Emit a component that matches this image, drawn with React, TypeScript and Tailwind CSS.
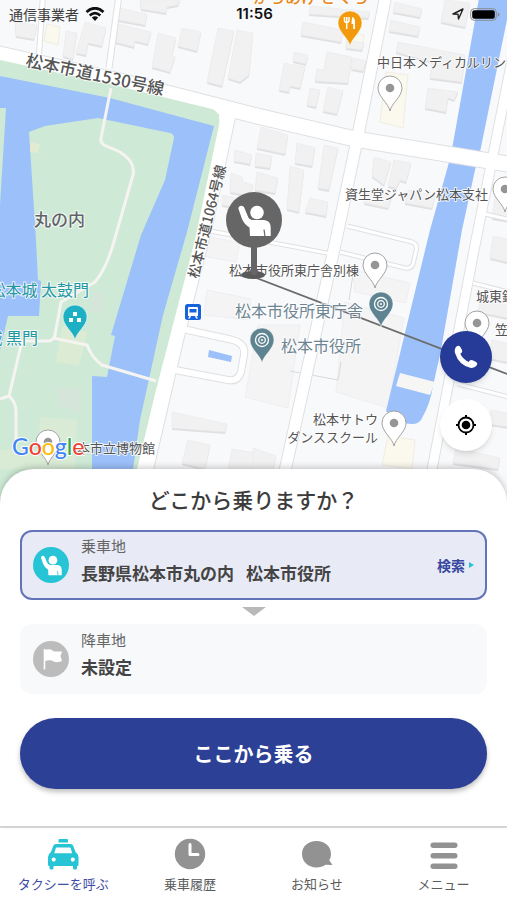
import type { ReactNode } from "react";

const MAP_FONT = "font-['Noto_Sans_CJK_JP',sans-serif]";

// rough footprints, drawn once in grey as a shadow and once on top
const BUILDINGS = [
  "15,22 37,25 34,39 16,36",
  "66,31 77,33 73,59 63,56",
  "85,22 106,28 102,46 88,43 86,55 76,53",
  "120,8 147,14 145,25 118,20",
  "118,24 151,32 148,44 135,41 134,47 115,42",
  "140,0 180,0 178,5 167,7 166,13 141,9",
  "158,33 176,38 172,55 175,57 170,72 152,67",
  "182,28 201,32 197,51 178,46",
  "218,28 234,31 222,86 207,82",
  "237,30 253,33 249,75 240,82 228,78",
  "235,150 252,155 250,164 234,161",
  "231,173 242,177 243,182 253,185 250,196 230,192",
  "222,195 236,198 234,207 222,205",
  "310,6 370,12 368,18 309,14",
  "303,22 343,30 341,42 301,35",
  "347,40 364,43 362,50 346,48",
  "294,52 308,55 306,64 293,61",
  "284,63 305,67 300,88 290,86 289,92 279,90",
  "327,52 352,57 350,68 348,83 315,81 317,69 324,70",
  "353,58 366,61 363,71 351,69",
  "310,88 320,90 316,107 307,105",
  "328,87 343,91 337,114 323,111",
  "395,2 422,9 420,17 393,12",
  "391,20 420,27 418,36 389,31",
  "445,0 470,3 465,27 441,22",
  "398,42 465,55 462,82 430,78 432,62 396,52",
  "428,88 458,92 454,100 448,98 446,112 425,108",
  "261,127 288,135 285,154 257,148",
  "256,153 272,156 270,168 255,166",
  "257,172 278,178 275,193 255,190",
  "297,143 315,148 312,166 295,163",
  "324,145 338,148 329,190 318,188",
  "290,166 304,170 299,212 287,209",
  "374,157 391,162 384,185 372,176",
  "394,160 411,163 406,182 400,180 396,188 388,186",
  "310,198 328,202 326,216 305,212",
  "366,190 392,196 388,208 364,203",
  "408,190 435,196 432,208 405,203",
  "495,198 520,202 516,222 492,218",
  "493,236 520,242 516,264 490,258",
  "480,300 510,306 508,318 478,312",
  "492,340 520,346 516,364 488,358",
  "491,410 520,416 516,428 489,424",
  "456,448 500,458 498,469 453,463",
  "172,412 227,424 225,432 172,428",
  "188,440 210,445 205,469 182,463",
  "232,449 262,454 260,469 228,469",
  "253,448 276,456 273,469 253,469",
];

// larger plots without a shadow
const PLOTS = [
  "206,236 240,243 236,262 203,256",
  "207,290 251,299 249,320 204,315",
  "258,325 300,325 288,408 245,397",
  "353,270 410,283 406,303 355,292",
  "345,302 404,318 388,408 336,392",
];

const TAN_PLOTS = [
  "47,24 60,27 58,45 44,41",
  "386,72 408,75 403,128 380,122",
  "347,32 364,35 362,50 346,48",
  "388,436 415,440 412,469 382,465",
];

const ROADS = [
  { d: "M-5 53 L120 81 L253 115 L355 139 L520 166", w: 15 },
  { d: "M228 112 L203 230 L175 340 L145 469 L130 535", w: 16 },
  { d: "M386 -5 L356 145 L336 240 L283 480 L270 535", w: 11 },
  { d: "M520 20 L491 165 L476 240 L430 480 L420 535", w: 9 },
  { d: "M119 -5 L109 68", w: 5 },
  { d: "M43 -5 L39 55", w: 4 },
  { d: "M183 329 L233 340 Q246 344 244 355 L241 372 Q238 382 228 380 L175 370", w: 6 },
  { d: "M485 214 L520 222", w: 3 },
  { d: "M473 283 L520 295", w: 3 },
  { d: "M458 384 L520 400", w: 3 },
  { d: "M347 226 L412 242 Q418 244 416 251 L413 264 Q411 269 405 268 L340 252", w: 3 },
  { d: "M205 230 L332 254", w: 3 },
];

const STATUS_TEXT = "font-['Noto_Sans_CJK_JP',sans-serif] text-sm text-[#3c3c3c]";

export default function App() {
  return (
    <main
      className={`flex min-h-screen w-full flex-col overflow-x-hidden bg-white text-[#444] ${MAP_FONT}`}
    >
      <section className="relative shrink-0" aria-label="地図">
        <CityMap />
        <StatusBar />
        <div className="absolute right-[15px] top-[331px] flex flex-col gap-4">
          <button
            type="button"
            aria-label="電話"
            className="flex h-[52px] w-[52px] items-center justify-center rounded-full bg-[#263b98] shadow-md"
          >
            <PhoneIcon />
          </button>
          <button
            type="button"
            aria-label="現在地"
            className="flex h-[52px] w-[52px] items-center justify-center rounded-full bg-white shadow-md"
          >
            <LocateIcon />
          </button>
        </div>
      </section>

      <section className="relative -mt-[61px] flex-1 rounded-t-[34px] bg-white px-5 pb-9 pt-[15px] shadow-[0_-2px_6px_rgba(0,0,0,0.2)]">
        <h1 className="mb-4 text-center text-[21px] font-medium leading-[30px] text-[#3c3c3c]">
          どこから乗りますか？
        </h1>

        <button
          type="button"
          className="flex h-[70px] w-full items-center rounded-xl border-2 border-[#6373b9] bg-[#e8ebf5] px-[11px] text-left"
        >
          <span className="flex h-9 w-9 shrink-0 items-center justify-center rounded-full bg-[#27c4d6]">
            <HailIcon />
          </span>
          <PlaceText label="乗車地">
            <span>長野県松本市丸の内</span>
            <span>松本市役所</span>
          </PlaceText>
          <span className="ml-auto flex items-center gap-1 text-sm font-bold text-[#3748a0]">
            検索
            <svg viewBox="0 0 5 6" className="h-[6px] w-[5px]">
              <path d="M0 0 L5 3 L0 6Z" fill="#27c4d6" />
            </svg>
          </span>
        </button>

        <svg viewBox="0 0 24 9" className="mx-auto mb-2 mt-[7px] block h-[9px] w-6">
          <path d="M0 0 H24 L12 9Z" fill="#b9b9b9" />
        </svg>

        <button
          type="button"
          className="flex h-[70px] w-full items-center rounded-xl bg-[#f7f9fb] px-[13px] text-left"
        >
          <span className="flex h-9 w-9 shrink-0 items-center justify-center rounded-full bg-[#bcbcbc]">
            <FlagIcon />
          </span>
          <PlaceText label="降車地">
            <span>未設定</span>
          </PlaceText>
        </button>

        <button
          type="button"
          className="mt-6 h-[71px] w-full rounded-full bg-[#2c4095] text-xl font-bold text-white shadow-[0_3px_5px_rgba(0,0,0,0.25)]"
        >
          ここから乗る
        </button>
      </section>

      <nav className="grid grid-cols-4 border-t-2 border-[#dcdcdc] bg-white pb-[6px] pt-[10px]">
        <NavItem label="タクシーを呼ぶ" active>
          <path
            fillRule="evenodd"
            d="M12.500 1 H20 Q21 1 21 2 V4.500 H11.500 V2 Q11.500 1 12.500 1Z M9 6 H23.500 Q25.500 6 26.300 8 L28.500 14 Q31.500 16 31.500 19 V27 Q31.500 28 30 28 V30 Q30 31.500 28.500 31.500 H27.500 Q26 31.500 26 30 V28 H6.500 V30 Q6.500 31.500 5 31.500 H4 Q2.500 31.500 2.500 30 V28 Q1 28 1 27 V19 Q1 16 4 14 L6.200 8 Q7 6 9 6Z M9.500 9.500 Q9 9.500 8.700 10.500 L7.300 15.300 H25.200 L23.800 10.500 Q23.500 9.500 23 9.500Z M6.700 19.500 A2.100 2.100 0 1 0 6.700 23.700 A2.100 2.100 0 1 0 6.700 19.500Z M25.800 19.500 A2.100 2.100 0 1 0 25.800 23.700 A2.100 2.100 0 1 0 25.800 19.500Z"
          />
        </NavItem>
        <NavItem label="乗車履歴">
          <circle cx="16" cy="16" r="15.200" />
          <path
            d="M16 6.500 V16.500 H24"
            fill="none"
            stroke="#fff"
            strokeWidth="3"
            strokeLinecap="round"
            strokeLinejoin="round"
          />
        </NavItem>
        <NavItem label="お知らせ">
          <path d="M15.500 3 C24 3 30 8.500 30 16 C30 18.500 29.300 20.500 28.200 22.300 L31.500 27 L24.500 26.800 C22 28.500 19 29.400 15.500 29.400 C7 29.400 1 23.500 1 16 C1 8.500 7 3 15.500 3Z" />
        </NavItem>
        <NavItem label="メニュー">
          <rect x="2.500" y="4.500" width="27" height="5.500" rx="2.700" />
          <rect x="2.500" y="15" width="27" height="5.500" rx="2.700" />
          <rect x="2.500" y="25.500" width="27" height="5.500" rx="2.700" />
        </NavItem>
      </nav>
    </main>
  );
}

function PlaceText({ label, children }: { label: string; children: ReactNode }) {
  return (
    <span className="ml-3 flex flex-col pb-2">
      <span className="text-[15px] leading-6 text-[#666]">{label}</span>
      <span className="flex gap-3 text-[17px] font-bold leading-[30px] text-[#444]">
        {children}
      </span>
    </span>
  );
}

function NavItem({
  label,
  active = false,
  children,
}: {
  label: string;
  active?: boolean;
  children: ReactNode;
}) {
  return (
    <a
      href="#"
      aria-current={active ? "page" : undefined}
      className={`flex flex-col items-center gap-1 text-[13px] leading-5 ${
        active ? "text-[#3f4da5]" : "text-[#5c5c5c]"
      }`}
    >
      <svg
        viewBox="0 0 32 32"
        className={`h-8 w-8 ${active ? "fill-[#27c4d6]" : "fill-[#929292]"}`}
      >
        {children}
      </svg>
      {label}
    </a>
  );
}

function StatusBar() {
  return (
    <div className="absolute inset-x-0 top-0 grid h-7 grid-cols-3 items-center pl-[9px] pr-[7px]">
      <div className="flex items-center gap-1.5">
        <span className={STATUS_TEXT}>通信事業者</span>
        <svg viewBox="0 0 20 14" className="h-[14px] w-5" fill="none" stroke="#111">
          <path d="M1.500 5 Q10 -2.500 18.500 5" strokeWidth="2.800" />
          <path d="M4.700 8.500 Q10 3.800 15.300 8.500" strokeWidth="2.600" />
          <path d="M6.800 10.500 Q10 7.800 13.200 10.500 L10 14Z" fill="#111" stroke="none" />
        </svg>
      </div>
      <div className="text-center font-['Inter',sans-serif] text-[15px] font-semibold text-[#111]">
        11:56
      </div>
      <div className="flex items-center justify-end gap-1.5">
        <svg viewBox="0 0 12 12" className="h-3 w-3">
          <path
            d="M1 6 L11 1 L6.500 11 L6 6.300Z"
            fill="none"
            stroke="#222"
            strokeWidth="1.400"
            strokeLinejoin="round"
          />
        </svg>
        <svg viewBox="0 0 30 13" className="h-[13px] w-[30px]">
          <rect x="0.700" y="0.700" width="25.600" height="11.600" rx="3.500" fill="none" stroke="#8c8c8c" />
          <rect x="2.200" y="2.200" width="22.600" height="8.600" rx="2" fill="#000" />
          <path d="M27.800 4.300 Q29.500 5 29.500 6.500 Q29.500 8 27.800 8.700Z" fill="#8c8c8c" />
        </svg>
      </div>
    </div>
  );
}

function CityMap() {
  return (
    <svg viewBox="0 0 507 530" className="block w-full" role="img" aria-label="松本市丸の内周辺">
      <rect width="507" height="530" fill="#f8f9fb" />

      {PLOTS.map((p) => (
        <polygon key={p} points={p} fill="#f4f4f5" stroke="#efeff1" />
      ))}
      {TAN_PLOTS.map((p) => (
        <polygon key={p} points={p} fill="#fbf8ee" stroke="#f0ede4" />
      ))}
      {BUILDINGS.map((p) => (
        <g key={p}>
          <polygon points={p} fill="#e0e0e2" transform="translate(0 2)" />
          <polygon points={p} fill="#f1f1f2" stroke="#eaeaec" strokeWidth="0.600" />
        </g>
      ))}
      <path d="M290 371 L338 380 L341 362 M353 275 L349 300" stroke="#d9d9dc" fill="none" />

      {/* river */}
      <path
        d="M479 -2 L452 149 L448 166 L430 230 L386 411 L398 423 L413 424 Q420 424 423 416 Q430 404 433 386 L441 350 L462 230 L475 170 L480 152 L509 10 V-2Z"
        fill="#9cc0f9"
      />

      {/* casing first, so that the junctions stay open */}
      {ROADS.map((r) => (
        <path
          key={r.d}
          d={r.d}
          fill="none"
          stroke="#dfe0e3"
          strokeWidth={r.w + 2}
          strokeLinejoin="round"
        />
      ))}
      {ROADS.map((r) => (
        <path
          key={r.d}
          d={r.d}
          fill="none"
          stroke="#fff"
          strokeWidth={r.w}
          strokeLinejoin="round"
        />
      ))}
      <path d="M400 373 L435 382 L430 395 L396 386Z" fill="#f6f6f4" />
      <path d="M209 350 L232 356 L231 362 L208 357Z" fill="#9cc0f9" />

      {/* castle grounds and moat */}
      <path
        d="M0 60 L110 84 L212 109 Q221 112 219 125 L195 240 L156 390 L137 469 L122 530 H0Z"
        fill="#ceead6"
      />
      <path
        d="M0 76 L110 98 L214 126 L187 232 L163 315 L140 420 L133 469 L122 530 H92 V376 L107 377 L115 336 L111 335 L141 235 L165 180 L174 138 Q174 134 170 133 L98 118 L45 126 L29 132 L36 240 L38 280 L41 281 L39 316 L8 316 L0 350 V205 L6 108 H0Z"
        fill="#9cc0f9"
      />
      <rect x="0" y="500" width="10" height="30" fill="#9cc0f9" />
      <g fill="#d5e5d9">
        <polygon points="93,292 106,296 101,314 90,312" />
        <polygon points="62,326 87,332 79,366 56,362" fill="#dcebd3" />
        <polygon points="58,387 81,388 79,412 72,412 72,408 57,407" />
        <polygon points="40,417 77,420 75,469 0,469 0,450 38,446" fill="#d9ebd5" />
        <polygon points="30,142 40,144 38,153 30,152" fill="#e2ead2" />
      </g>
      <g fill="none" stroke="#f6f4f1" strokeWidth="3" strokeLinejoin="round">
        <path d="M111 88 L101 138 Q100 142 104 145 L120 152 Q136 162 133 175 L115 238 Q107 268 95 282 L61 302 L55 335 Q53 341 48 341 L22 341 L9 396 L0 399" />
        <path d="M53 338 L87 345 Q92 358 102 365 L156 381" />
        <path d="M9 396 Q16 402 16 412 V440" />
      </g>

      {/* route from the pickup point */}
      <path d="M254 277 L507 374" stroke="#6b6b6b" strokeWidth="1.800" />

      <Label x={25} y={66} size={17} rotate={12} weight={500}>
        松本市道1530号線
      </Label>
      <Label x={198} y={279} size={14} rotate={-76} weight={500}>
        松本市道1064号線
      </Label>
      <Label x={34} y={226} size={17} weight={500} fill="#5f6368">
        丸の内
      </Label>
      <Label x={89} y={296} size={16} end fill="#2497a3">
        松本城 太鼓門
      </Label>
      <Label x={38} y={344} size={16} end fill="#2497a3">
        松本城 黒門
      </Label>
      <Label x={377} y={67} size={13}>
        中日本メディカルリンク
      </Label>
      <Label x={488} y={199} size={13} end>
        資生堂ジャパン松本支社
      </Label>
      <Label x={359} y={275} size={13} end>
        松本市役所東庁舎別棟
      </Label>
      <Label x={363} y={317} size={16} end fill="#6d8592">
        松本市役所東庁舎
      </Label>
      <Label x={361} y={352} size={16} end fill="#6d8592">
        松本市役所
      </Label>
      <Label x={378} y={424} size={13} end>
        松本サトウ
      </Label>
      <Label x={378} y={442} size={13} end>
        ダンススクール
      </Label>
      <Label x={476} y={301} size={13}>
        城東鉱
      </Label>
      <Label x={495} y={334} size={13}>
        笠
      </Label>
      <Label x={155} y={453} size={13} end>
        本市立博物館
      </Label>
      <Label x={253} y={3} size={16} weight={500} fill="#e8891b">
        からあげ さくら
      </Label>

      <Pin x={390} y={88} />
      <Pin x={375} y={265} />
      <Pin x={477} y={323} />
      <Pin x={394} y={423} />
      <Pin x={505} y={189} />
      <Pin x={48} y={442} />
      <Pin x={350} y={23} fill="#f29a0c">
        <path
          d="M-5.500 -6 V-2.500 Q-5.500 -0.500 -3.300 -0.500 Q-1 -0.500 -1 -2.500 V-6 M-3.300 -6 V6"
          fill="none"
          stroke="#fff"
          strokeWidth="1.500"
        />
        <path d="M2 -6 Q5 -5.500 5 -1 V6 H3.200 V1 H1.500Z" fill="#fff" />
      </Pin>
      <Pin x={75} y={317} fill="#1db0c4">
        <path d="M-2 -5 h4 v4 h-4Z M-6 1 h4 v4 h-4Z M2 1 h4 v4 h-4Z" fill="#fff" />
      </Pin>
      <Pin x={381} y={304} fill="#5f8491">
        <Target />
      </Pin>
      <Pin x={262} y={340} fill="#5f8491">
        <Target />
      </Pin>

      {/* bus stop */}
      <rect x="185" y="304" width="16" height="16" rx="2.500" fill="#1763dc" />
      <path
        fillRule="evenodd"
        d="M189 307 H197 Q198 307 198 308 V316 H196.500 L198 318.500 H196 L195 316 H191 L190 318.500 H188 L189.500 316 H188 V308 Q188 307 189 307Z M189.500 309 V312.500 H196.500 V309Z"
        fill="#fff"
      />

      {/* pickup marker */}
      <ellipse cx="253" cy="275" rx="12" ry="4" fill="#5a5a5a" />
      <rect x="251" y="244" width="6" height="31" rx="2" fill="#666" />
      <g transform="translate(226 192)">
        <circle cx="28" cy="28" r="28" fill="#666" />
        <HailShape slit="#666" />
      </g>

      <text
        x="12"
        y="455"
        fontSize="23"
        stroke="#fff"
        strokeWidth="2"
        paintOrder="stroke"
        className="font-['Lato',sans-serif] font-medium"
      >
        <tspan fill="#4285f4">G</tspan>
        <tspan fill="#ea4335">o</tspan>
        <tspan fill="#fbbc05">o</tspan>
        <tspan fill="#4285f4">g</tspan>
        <tspan fill="#34a853">l</tspan>
        <tspan fill="#ea4335">e</tspan>
      </text>
    </svg>
  );
}

function Label({
  x,
  y,
  size,
  rotate = 0,
  weight = 400,
  fill = "#555",
  end = false,
  children,
}: {
  x: number;
  y: number;
  size: number;
  rotate?: number;
  weight?: number;
  fill?: string;
  end?: boolean;
  children: string;
}) {
  return (
    <text
      x={x}
      y={y}
      fontSize={size}
      fontWeight={weight}
      fill={fill}
      stroke="#fff"
      strokeOpacity="0.800"
      strokeWidth="2"
      strokeLinejoin="round"
      paintOrder="stroke"
      textAnchor={end ? "end" : "start"}
      transform={rotate ? `rotate(${rotate} ${x} ${y})` : undefined}
      className={MAP_FONT}
    >
      {children}
    </text>
  );
}

// x, y is the centre of the pin's head
function Pin({
  x,
  y,
  fill,
  children,
}: {
  x: number;
  y: number;
  fill?: string;
  children?: ReactNode;
}) {
  return (
    <g transform={`translate(${x} ${y})`}>
      <path
        d="M0 23 C-1.500 15 -12 9 -12 0 A12 12 0 0 1 12 0 C12 9 1.500 15 0 23Z"
        fill={fill ?? "#fff"}
        stroke={fill ? "#fff" : "#a3a3a3"}
        strokeWidth={fill ? 0.5 : 1}
      />
      {children ?? <circle r="4.300" fill="#959595" />}
    </g>
  );
}

function Target() {
  return (
    <>
      <circle r="6.500" fill="none" stroke="#fff" strokeWidth="1.300" />
      <circle r="3.300" fill="none" stroke="#fff" strokeWidth="1.300" />
      <circle r="1" fill="#fff" />
    </>
  );
}

function HailShape({ slit }: { slit: string }) {
  return (
    <>
      <circle cx="31" cy="20.500" r="6.800" fill="#fff" />
      <path
        d="M12.500 17 Q12 15 14 14 Q17 13 18.200 15.500 L21.500 23.500 Q23 28 27 28 H38 Q44.500 28.500 44.700 35 V44 H24 L23.500 35.500 Q18 32 16 27Z"
        fill="#fff"
      />
      <path d="M38 37.500 L39 44.500" stroke={slit} strokeWidth="1.200" />
    </>
  );
}

function HailIcon() {
  return (
    <svg viewBox="0 0 56 56" className="h-9 w-9">
      <HailShape slit="#27c4d6" />
    </svg>
  );
}

function FlagIcon() {
  return (
    <svg viewBox="0 0 36 36" className="h-9 w-9">
      <path d="M11.500 8 V28.500" stroke="#fff" strokeWidth="1.600" />
      <path
        d="M12 9 Q16 7.500 19 9 Q20 10.500 22 10.500 H29 L27.500 15 L29 20 Q25 22 20.500 20.500 Q18 18.500 12 20Z"
        fill="#fff"
      />
    </svg>
  );
}

function PhoneIcon() {
  return (
    <svg viewBox="0 0 26 26" className="h-[26px] w-[26px]">
      <path
        d="M3.500 2.500 Q5.500 0.800 7.200 2.800 L9 6 Q9.800 7.800 8.300 9 L7.300 9.800 Q9.500 15 15.500 18 L16.600 16.800 Q17.800 15.600 19.500 16.300 L23.200 18 Q25.200 19.300 23.800 21.300 Q21.500 24.500 18 24 Q6 21.500 2 9 Q1 5 3.500 2.500Z"
        fill="#fff"
      />
    </svg>
  );
}

function LocateIcon() {
  return (
    <svg viewBox="0 0 22 22" className="h-[22px] w-[22px]">
      <circle cx="11" cy="11" r="7.500" fill="none" stroke="#000" strokeWidth="1.800" />
      <circle cx="11" cy="11" r="4.300" />
      <path d="M11 1 V4 M11 18 V21 M1 11 H4 M18 11 H21" stroke="#000" strokeWidth="2" />
    </svg>
  );
}
